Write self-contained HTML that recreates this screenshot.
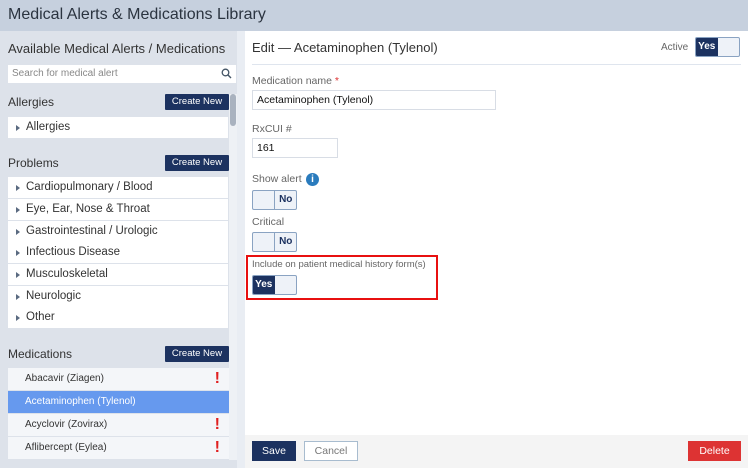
<!DOCTYPE html>
<html><head><style>
*{box-sizing:border-box;margin:0;padding:0}
body{width:748px;height:468px;overflow:hidden;font-family:"Liberation Sans",sans-serif;background:#e9edf3;position:relative;color:#333}
.a{position:absolute}
.hdr{left:0;top:0;width:748px;height:31px;background:#c6d0de;font-size:16px;color:#2b3440;padding:6px 8px}
.left{left:0;top:31px;width:237px;height:437px;background:#dde2ea}
.btn{background:#1c3260;color:#fff;font-size:9.5px;text-align:center;line-height:16px;height:16px;width:64px;left:165px;border-radius:1px}
.sec{font-size:12px;color:#333;left:8px}
.item{left:8px;width:220px;height:21px;background:#fff;font-size:11.5px;color:#333;padding-left:18px;line-height:21px}
.item:before{content:"";position:absolute;left:8px;top:8px;border-left:4px solid #5a6a80;border-top:3px solid transparent;border-bottom:3px solid transparent}
.med{left:8px;width:221px;height:22px;background:#f4f6f9;font-size:10px;color:#333;padding-left:17px;line-height:22px}
.ex{position:absolute;right:9px;top:3px;color:#e02020;font-weight:bold;font-size:16px;line-height:16px}
.lbl{font-size:10.5px;color:#666;left:252px}
.inp{left:252px;height:20px;border:1px solid #d8dde5;background:#fff;font-size:10.5px;color:#111;padding:3px 4px}
.tg{height:20px;width:45px;border:1px solid #8aa3c2;background:#eef2f8;display:flex;font-size:10px;font-weight:bold;border-radius:2px;overflow:hidden}
.tg span{width:22px;text-align:center;line-height:18px}
.dk{background:#1c3260;color:#fff}
.no{border-left:1px solid #8aa3c2;color:#1c3260}
</style></head><body>
<div class="a hdr">Medical Alerts &amp; Medications Library</div>
<div class="a left"></div>
<div class="a" style="left:8px;top:41px;font-size:13px;color:#333">Available Medical Alerts / Medications</div>
<div class="a" style="left:8px;top:65px;width:228px;height:18px;background:#fff;font-size:10px;color:#888;padding:3px 4px">Search for medical alert
<svg class="a" style="right:4px;top:3px" width="11" height="11" viewBox="0 0 11 11"><circle cx="4.5" cy="4.5" r="3.3" fill="none" stroke="#456" stroke-width="1.3"/><path d="M7 7l3 3" stroke="#456" stroke-width="1.4"/></svg></div>
<div class="a" style="left:229px;top:94px;width:8px;height:366px;background:#eef1f5"></div>
<div class="a" style="left:230px;top:94px;width:6px;height:32px;background:#a9b2bf;border-radius:3px"></div>
<div class="a sec" style="top:95px">Allergies</div>
<div class="a btn" style="top:94px">Create New</div>
<div class="a item" style="top:117px">Allergies</div>
<div class="a sec" style="top:156px">Problems</div>
<div class="a btn" style="top:155px">Create New</div>
<div class="a item" style="top:177px">Cardiopulmonary / Blood</div>
<div class="a item" style="top:199px">Eye, Ear, Nose &amp; Throat</div>
<div class="a item" style="top:221px">Gastrointestinal / Urologic</div>
<div class="a item" style="top:242px">Infectious Disease</div>
<div class="a item" style="top:264px">Musculoskeletal</div>
<div class="a item" style="top:286px">Neurologic</div>
<div class="a item" style="top:307px">Other</div>
<div class="a sec" style="top:347px">Medications</div>
<div class="a btn" style="top:346px">Create New</div>
<div class="a med" style="top:368px">Abacavir (Ziagen)<span class="ex">!</span></div>
<div class="a med" style="top:391px;background:#6699ee;color:#fff">Acetaminophen (Tylenol)</div>
<div class="a med" style="top:414px">Acyclovir (Zovirax)<span class="ex">!</span></div>
<div class="a med" style="top:437px">Aflibercept (Eylea)<span class="ex">!</span></div>

<div class="a" style="left:245px;top:31px;width:503px;height:404px;background:#fff"></div>
<div class="a" style="left:245px;top:435px;width:503px;height:33px;background:#f4f4f4"></div>
<div class="a" style="left:252px;top:40px;font-size:13px;color:#333">Edit — Acetaminophen (Tylenol)</div>
<div class="a" style="left:661px;top:42px;font-size:10px;color:#666">Active</div>
<div class="a tg" style="left:695px;top:37px"><span class="dk">Yes</span><span></span></div>
<div class="a" style="left:252px;top:64px;width:489px;height:1px;background:#dfe5ee"></div>
<div class="a lbl" style="top:75px">Medication name <span style="color:#d33">*</span></div>
<div class="a inp" style="top:90px;width:244px">Acetaminophen (Tylenol)</div>
<div class="a lbl" style="top:123px">RxCUI #</div>
<div class="a inp" style="top:138px;width:86px">161</div>
<div class="a lbl" style="top:173px">Show alert</div>
<div class="a" style="left:306px;top:173px;width:13px;height:13px;border-radius:50%;background:#2a7bbd;color:#fff;font-size:10px;font-weight:bold;text-align:center;line-height:13px">i</div>
<div class="a tg" style="left:252px;top:190px"><span></span><span class="no">No</span></div>
<div class="a lbl" style="top:216px">Critical</div>
<div class="a tg" style="left:252px;top:232px"><span></span><span class="no">No</span></div>
<div class="a" style="left:246px;top:255px;width:192px;height:45px;border:2px solid #e81010"></div>
<div class="a lbl" style="top:259px;font-size:9.5px">Include on patient medical history form(s)</div>
<div class="a tg" style="left:252px;top:275px"><span class="dk">Yes</span><span></span></div>
<div class="a" style="left:252px;top:441px;width:44px;height:20px;background:#1c3260;color:#fff;font-size:10.5px;text-align:center;line-height:20px">Save</div>
<div class="a" style="left:304px;top:441px;width:54px;height:20px;border:1px solid #a8bccf;background:#fff;color:#777;font-size:10.5px;text-align:center;line-height:18px">Cancel</div>
<div class="a" style="left:688px;top:441px;width:53px;height:20px;background:#dd3333;color:#fff;font-size:10.5px;text-align:center;line-height:20px">Delete</div>
</body></html>
